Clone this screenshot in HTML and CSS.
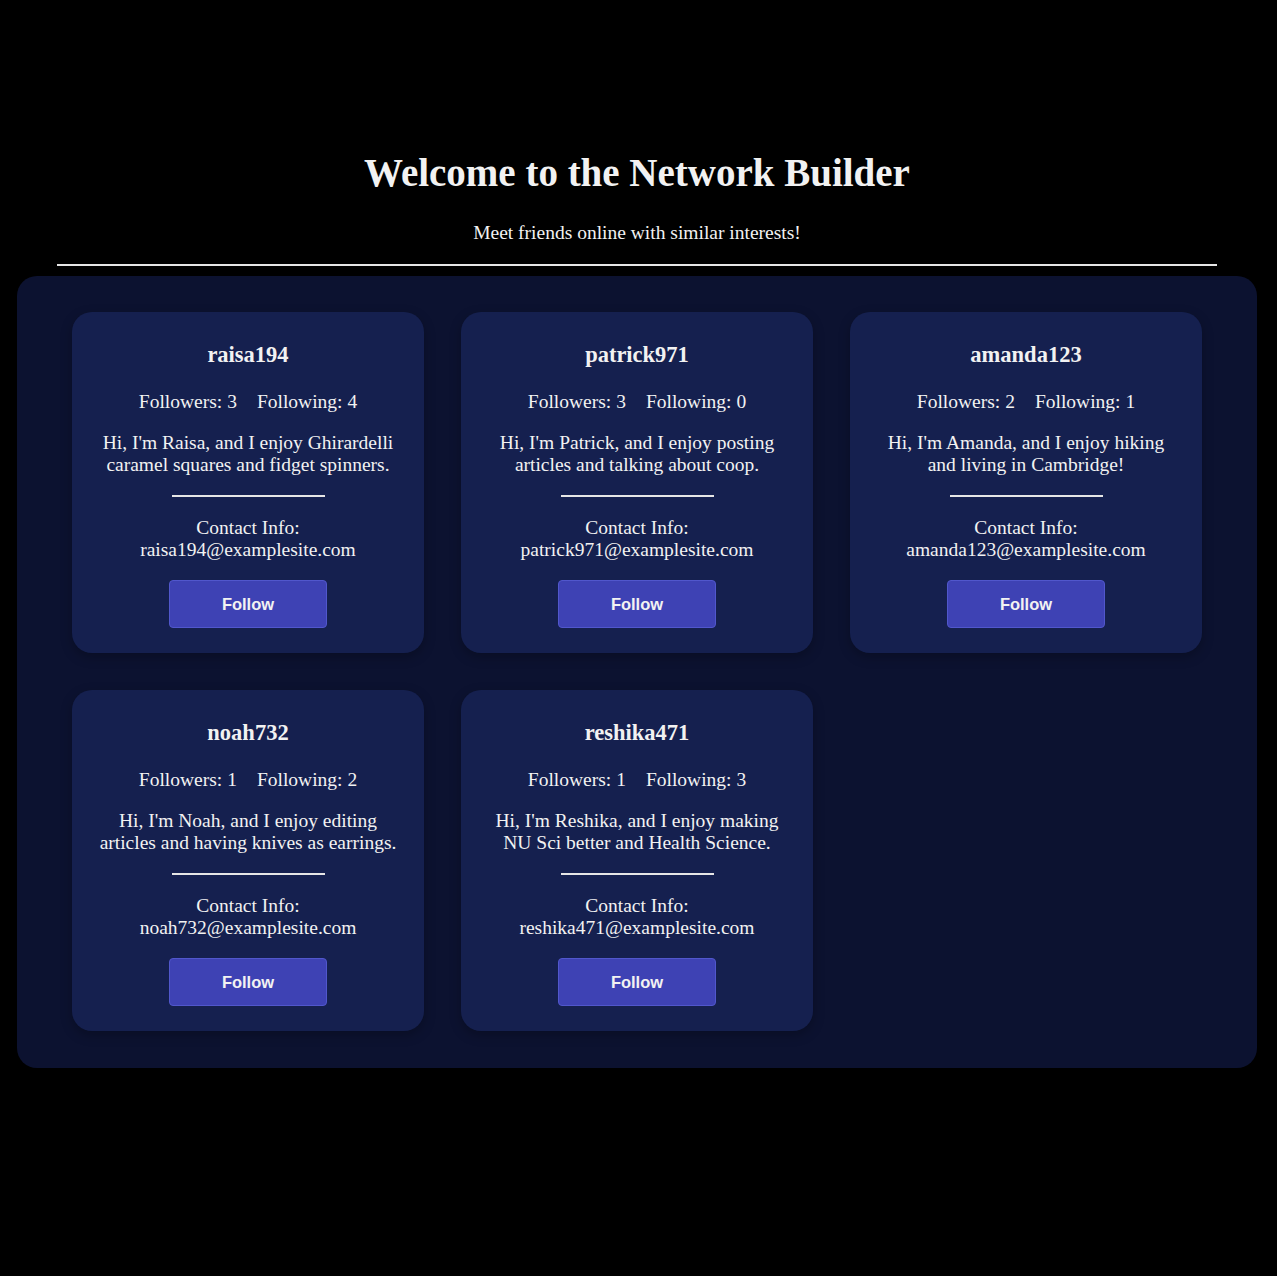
FILE: index.html
```html
<!DOCTYPE html>
<html>
<head>
<meta charset="utf-8">
<title>Network Builder</title>
<link rel="stylesheet" href="styles.css">
</head>
<body>
<header class="header">
  <h1 class="title">Welcome to the Network Builder</h1>
  <p class="subtitle">Meet friends online with similar interests!</p>
  <hr class="header-rule">
</header>
<main class="board">
  <div class="grid">
    <div class="card">
      <h2 class="name">raisa194</h2>
      <p class="stats"><span>Followers: 3</span><span>Following: 4</span></p>
      <p class="bio">Hi, I'm Raisa, and I enjoy Ghirardelli caramel squares and fidget spinners.</p>
      <hr class="card-rule">
      <p class="contact">Contact Info:<br>raisa194@examplesite.com</p>
      <button class="follow">Follow</button>
    </div>
    <div class="card">
      <h2 class="name">patrick971</h2>
      <p class="stats"><span>Followers: 3</span><span>Following: 0</span></p>
      <p class="bio">Hi, I'm Patrick, and I enjoy posting articles and talking about coop.</p>
      <hr class="card-rule">
      <p class="contact">Contact Info:<br>patrick971@examplesite.com</p>
      <button class="follow">Follow</button>
    </div>
    <div class="card">
      <h2 class="name">amanda123</h2>
      <p class="stats"><span>Followers: 2</span><span>Following: 1</span></p>
      <p class="bio">Hi, I'm Amanda, and I enjoy hiking and living in Cambridge!</p>
      <hr class="card-rule">
      <p class="contact">Contact Info:<br>amanda123@examplesite.com</p>
      <button class="follow">Follow</button>
    </div>
    <div class="card">
      <h2 class="name">noah732</h2>
      <p class="stats"><span>Followers: 1</span><span>Following: 2</span></p>
      <p class="bio">Hi, I'm Noah, and I enjoy editing articles and having knives as earrings.</p>
      <hr class="card-rule">
      <p class="contact">Contact Info:<br>noah732@examplesite.com</p>
      <button class="follow">Follow</button>
    </div>
    <div class="card">
      <h2 class="name">reshika471</h2>
      <p class="stats"><span>Followers: 1</span><span>Following: 3</span></p>
      <p class="bio">Hi, I'm Reshika, and I enjoy making NU Sci better and Health Science.</p>
      <hr class="card-rule">
      <p class="contact">Contact Info:<br>reshika471@examplesite.com</p>
      <button class="follow">Follow</button>
    </div>
  </div>
</main>
</body>
</html>
```
FILE: styles.css
```css
html, body {
  background: #000;
}
body {
  margin: 0;
  padding: 0 20px 0 17px;
  font-family: "Liberation Serif", "Times New Roman", serif;
  color: #f2f2f2;
}
.header {
  padding: 152px 40px 0 40px;
  text-align: center;
}
.title {
  margin: 0;
  font-size: 39px;
  line-height: 42px;
  font-weight: bold;
}
.subtitle {
  margin: 28px 0 0 0;
  font-size: 19.5px;
  line-height: 22px;
}
.header-rule {
  margin: 20px 0 0 0;
  border: 0;
  height: 2px;
  background: #e6e6e6;
}
.board {
  margin-top: 10px;
  background: #0c1230;
  border-radius: 20px;
  padding: 36px 55px 37px 55px;
}
.grid {
  display: grid;
  grid-template-columns: repeat(3, 352px);
  gap: 37px;
}
.card {
  background: #15204f;
  border-radius: 20px;
  padding: 31px 23px 25px 23px;
  text-align: center;
  box-shadow: 0 4px 12px rgba(0, 0, 0, 0.25);
}
.name {
  margin: 0;
  font-size: 22.5px;
  line-height: 24px;
  font-weight: bold;
}
.stats {
  margin: 24px 0 0 0;
  font-size: 19.5px;
  line-height: 22px;
  display: flex;
  justify-content: center;
  gap: 20px;
}
.bio {
  margin: 19px 0 0 0;
  font-size: 19.5px;
  line-height: 22px;
}
.card-rule {
  width: 50%;
  margin: 19px auto 0 auto;
  border: 0;
  height: 2px;
  background: #e6e6e6;
}
.contact {
  margin: 20px 0 0 0;
  font-size: 19.5px;
  line-height: 22px;
}
.follow {
  margin-top: 19px;
  width: 158px;
  height: 48px;
  background: #3e42b4;
  border: 1px solid #5157cc;
  border-radius: 4px;
  color: #f2f2f2;
  font-family: "Liberation Sans", Arial, sans-serif;
  font-weight: bold;
  font-size: 16.5px;
  cursor: pointer;
}
```
